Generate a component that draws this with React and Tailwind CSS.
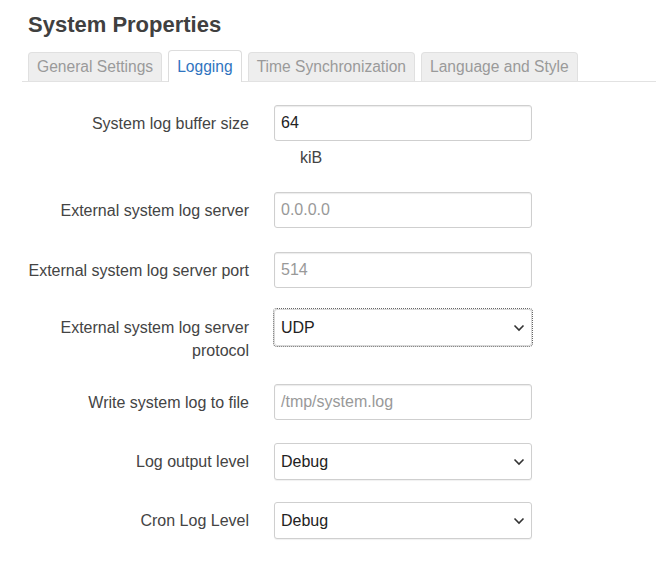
import React from "react";

const font = { fontFamily: '"Liberation Sans", Arial, sans-serif' };

function Chevron() {
  return (
    <svg width="12" height="8" viewBox="0 0 12 8" className="shrink-0">
      <path d="M1.5 1.5 L6 6 L10.5 1.5" fill="none" stroke="#333" strokeWidth="1.6" />
    </svg>
  );
}

function TextInput({ value, placeholder }) {
  return (
    <div className="w-[258px] h-[36px] border border-[#cfcfcf] rounded-[3px] shadow-[inset_0_1px_1px_rgba(0,0,0,0.08)] bg-white flex items-center px-[6px] text-[16px]">
      {value ? (
        <span className="text-[#222]">{value}</span>
      ) : (
        <span className="text-[#999]">{placeholder}</span>
      )}
    </div>
  );
}

function Select({ value, focus }) {
  return (
    <div
      className={
        "w-[258px] h-[37px] border rounded-[3px] bg-white flex items-center justify-between pl-[6px] pr-[6px] text-[16px] text-[#222] " +
        (focus
          ? "border-[#d8d8d8] outline outline-1 outline-dotted outline-[#666] outline-offset-0"
          : "border-[#cfcfcf] shadow-[0_1px_1px_rgba(0,0,0,0.06)]")
      }
    >
      <span>{value}</span>
      <Chevron />
    </div>
  );
}

function Row({ label, mt, children }) {
  return (
    <div className={"flex items-start " + mt}>
      <div className="w-[250px] pr-[1px] text-right text-[16px] leading-[23px] text-[#444] pt-[7px]">
        {label}
      </div>
      <div className="ml-[24px]">{children}</div>
    </div>
  );
}

export default function App() {
  const tabs = [
    { name: "General Settings" },
    { name: "Logging", active: true },
    { name: "Time Synchronization" },
    { name: "Language and Style" },
  ];
  return (
    <div className="w-[656px] h-[563px] bg-white overflow-hidden" style={font}>
      <h2 className="pl-[28px] pt-[11px] text-[22px] leading-[28px] font-bold text-[#404040]">
        System Properties
      </h2>
      <div className="ml-[22px] mt-[11px] flex items-end gap-[6px] pl-[6px] border-b border-[#e2e2e2]">
        {tabs.map((t) =>
          t.active ? (
            <div
              key={t.name}
              className="h-[32px] -mb-px px-[8px] flex items-center bg-white border border-b-0 border-[#dddddd] rounded-t-[4px] text-[15.6px] text-[#2f74c0]"
            >
              {t.name}
            </div>
          ) : (
            <div
              key={t.name}
              className="h-[29px] px-[8px] flex items-center bg-[#eeeeee] border border-b-0 border-[#e0e0e0] rounded-t-[4px] text-[15.6px] text-[#9a9a9a]"
            >
              {t.name}
            </div>
          )
        )}
      </div>

      <Row label="System log buffer size" mt="mt-[23px]">
        <TextInput value="64" />
        <div className="ml-[26px] mt-[7px] text-[16px] leading-[20px] text-[#444]">kiB</div>
      </Row>
      <Row label="External system log server" mt="mt-[24px]">
        <TextInput placeholder="0.0.0.0" />
      </Row>
      <Row label="External system log server port" mt="mt-[24px]">
        <TextInput placeholder="514" />
      </Row>
      <Row
        label={
          <>
            External system log server
            <br />
            protocol
          </>
        }
        mt="mt-[21px]"
      >
        <Select value="UDP" focus />
      </Row>
      <Row label="Write system log to file" mt="mt-[22px]">
        <TextInput placeholder="/tmp/system.log" />
      </Row>
      <Row label="Log output level" mt="mt-[23px]">
        <Select value="Debug" />
      </Row>
      <Row label="Cron Log Level" mt="mt-[22px]">
        <Select value="Debug" />
      </Row>
    </div>
  );
}
